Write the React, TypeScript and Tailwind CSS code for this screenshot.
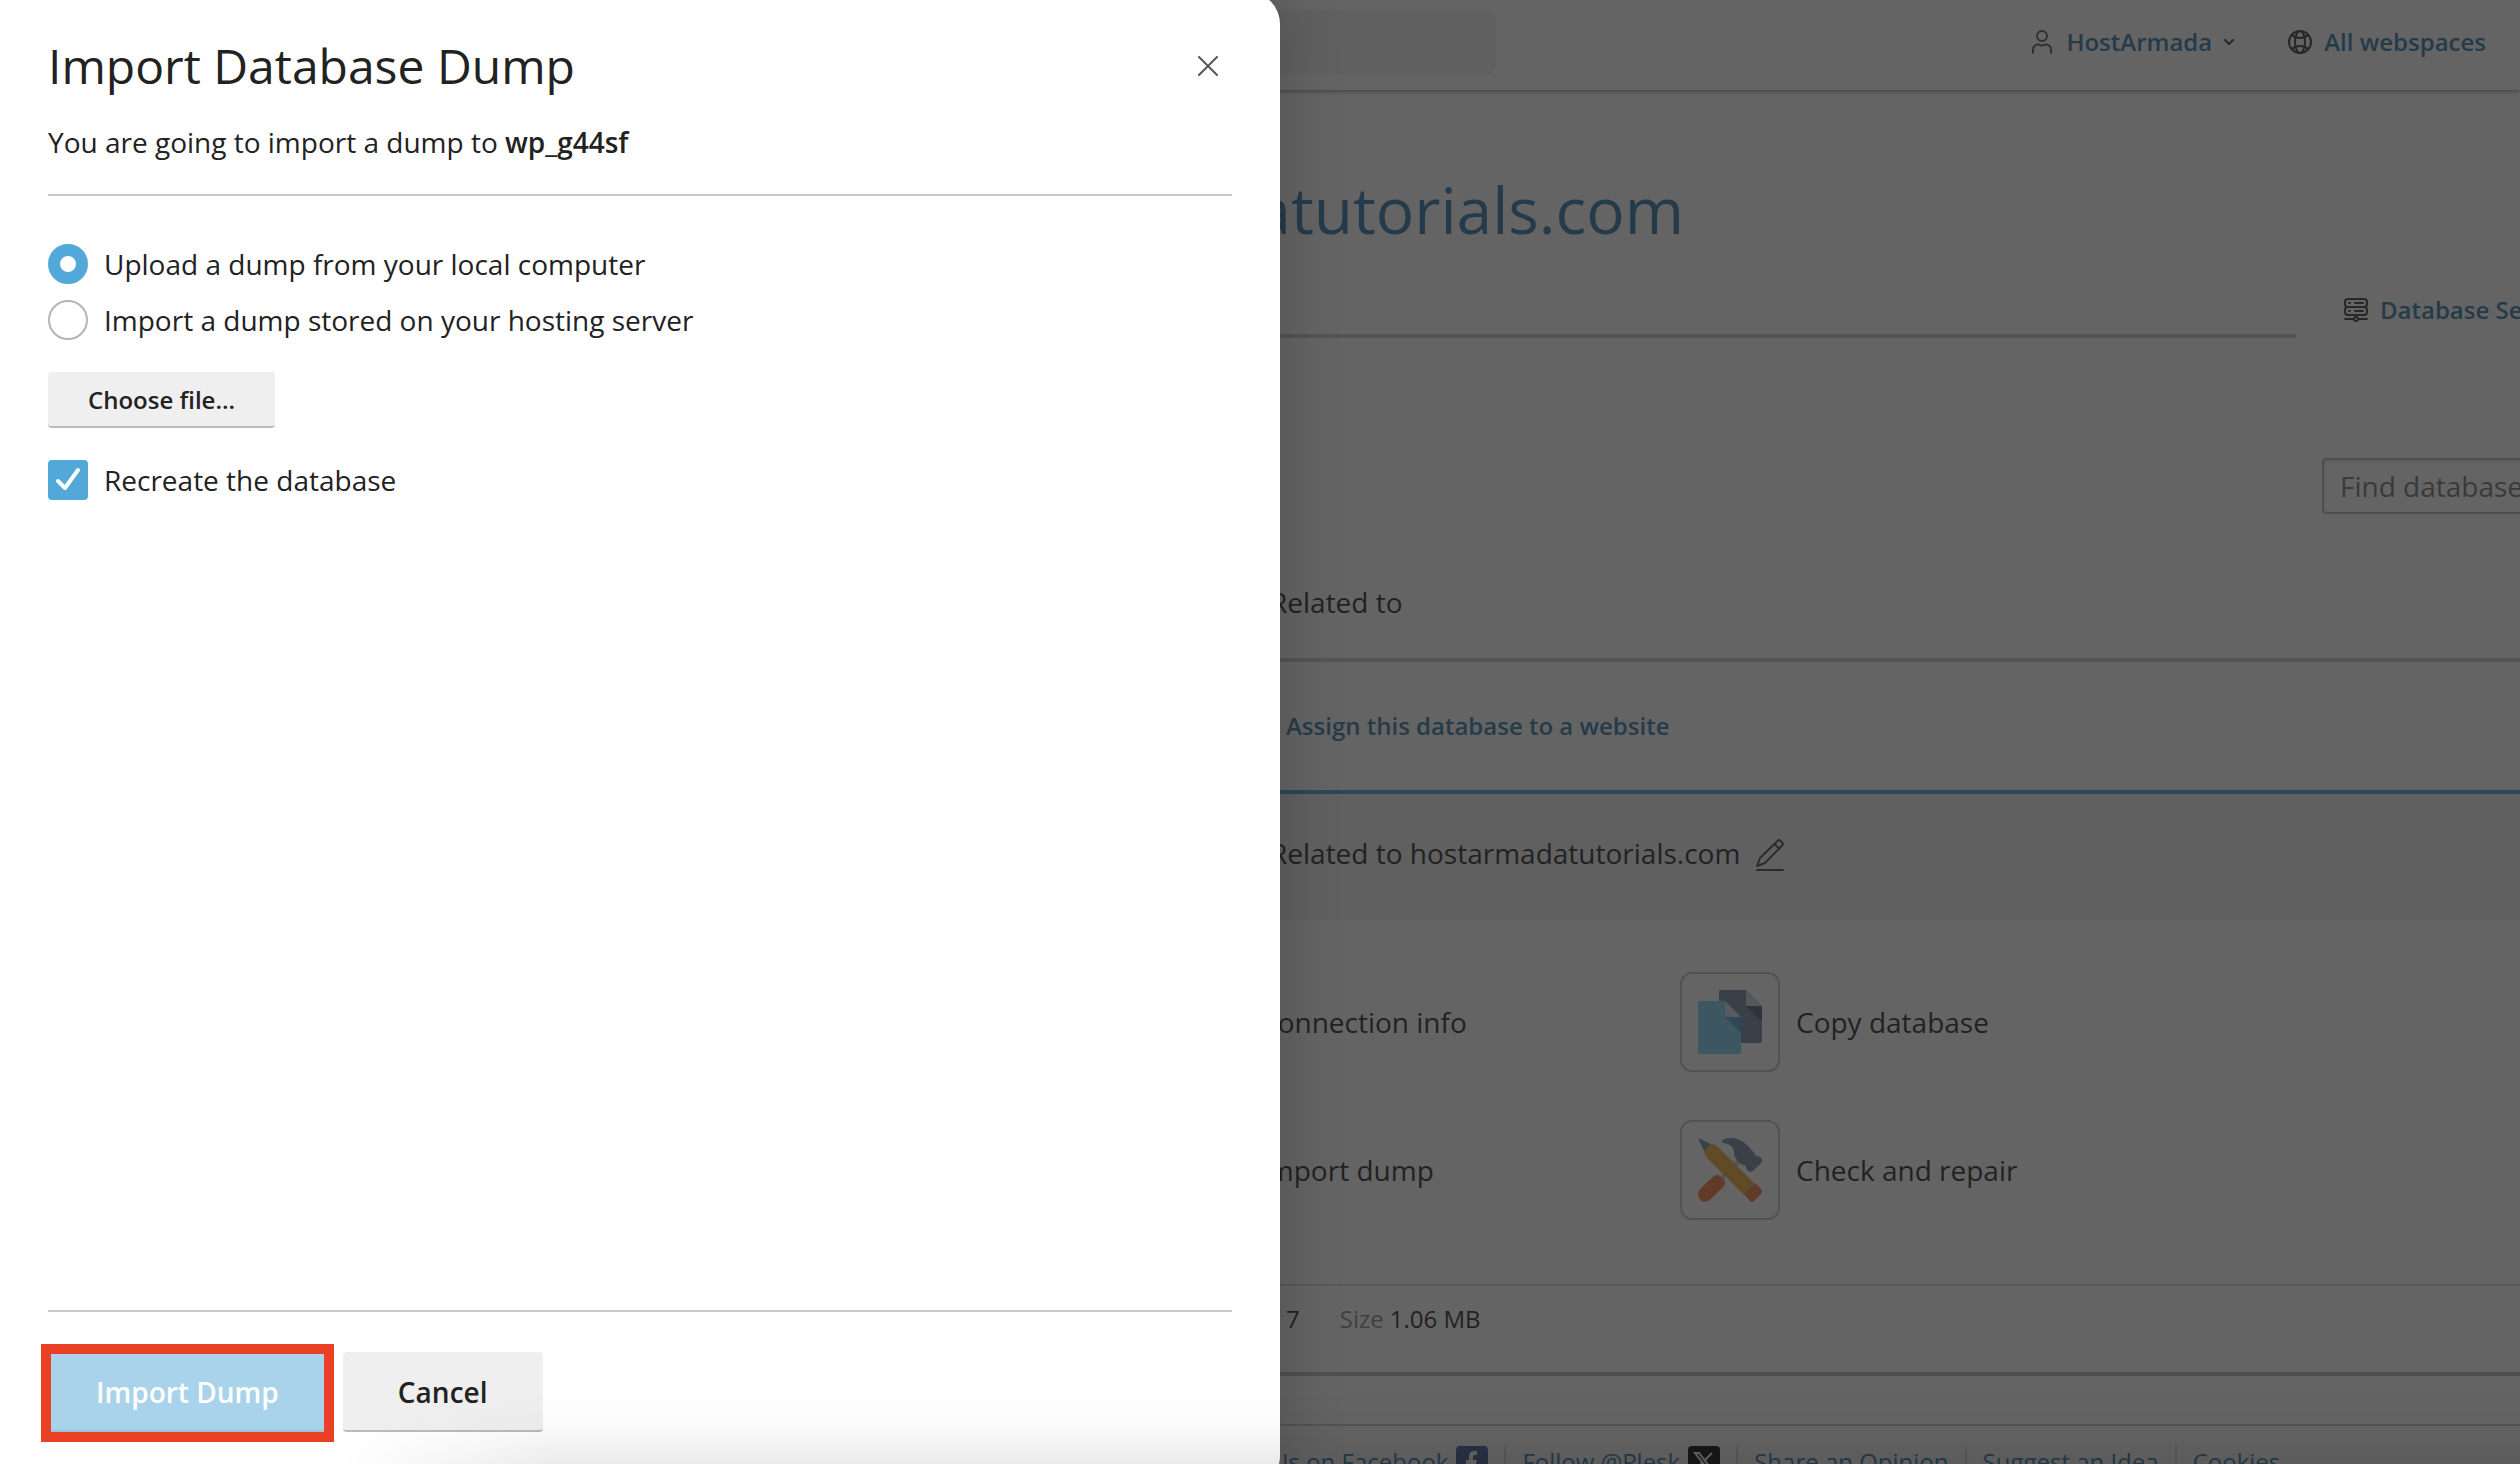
import type { ReactNode } from "react";

const iconStroke = {
  fill: "none",
  stroke: "currentColor",
  strokeWidth: 2,
  strokeLinecap: "round" as const,
  strokeLinejoin: "round" as const,
  "aria-hidden": true,
};

function UserIcon() {
  return (
    <svg className="h-6 w-6 text-[#555]" viewBox="0 0 24 24" {...iconStroke}>
      <circle cx="12" cy="6" r="5" />
      <path d="M3 23v-3.500a5 5 0 0 1 5-5c2 0 2.500 1 4 1s2-1 4-1a5 5 0 0 1 5 5V23" />
    </svg>
  );
}

function GlobeIcon() {
  return (
    <svg className="h-6 w-6 text-[#333]" viewBox="0 0 24 24" {...iconStroke}>
      <circle cx="12" cy="12" r="11" />
      <ellipse cx="12" cy="12" rx="5" ry="11" />
      <path d="M4 5c2 2 5 3 8 3s6-1 8-3M4 19c2-2 5-3 8-3s6 1 8 3" />
    </svg>
  );
}

function ServerIcon() {
  return (
    <svg className="h-6 w-6 text-[#333]" viewBox="0 0 24 24" {...iconStroke}>
      <rect x="1" y="1" width="22" height="8" rx="3" />
      <rect x="1" y="9" width="22" height="8" rx="3" />
      <path d="M5 5h1M11 5h8M5 13h1M11 13h8M1 21h8M15 21h8" />
      <circle cx="12" cy="21" r="2" />
    </svg>
  );
}

function EditIcon() {
  return (
    <svg className="h-8 w-7 text-[#444]" viewBox="0 0 28 32" {...iconStroke}>
      <path d="M1 27l3-8L22 1.500q1-1 2 0l2.500 2.500q1 1 0 2L9 24zM18.500 5l5 5" />
      <path d="M1 31h26" />
    </svg>
  );
}

function CopyIcon() {
  return (
    <svg className="h-16 w-16" viewBox="0 0 64 64" aria-hidden="true">
      <path fill="#71859d" d="M23 0h25l16 16v35a2 2 0 0 1-2 2H23a2 2 0 0 1-2-2V2a2 2 0 0 1 2-2z" />
      <path fill="#cbcfdb" d="M48 0l16 16H48z" />
      <path fill="#4c6078" d="M48 16h16v16z" />
      <path fill="#7bd4f3" d="M2 11h25l16 16v35a2 2 0 0 1-2 2H2a2 2 0 0 1-2-2V13a2 2 0 0 1 2-2z" />
      <path fill="#d0e2ee" d="M27 11l16 16H29a2 2 0 0 1-2-2z" />
      <path fill="#4ba0dc" d="M27 27h16v16z" />
    </svg>
  );
}

function ToolsIcon() {
  return (
    <svg className="h-16 w-16" viewBox="0 0 64 64" aria-hidden="true">
      <path stroke="#c3cddb" strokeWidth="5" d="M24 40l20-20" />
      <path
        fill="#71859d"
        d="M24 3C26 0 31 0 34 0c9 0 17 8 23 16q0 2 3 2 5 2 4 6l-9 9q-3 2-6-1-1-5-4-5-7-3-9-11 1-9-10-11-3 0-2-2z"
      />
      <path
        fill="#f37535"
        d="M16 38q3-2 6 0l4 4q2 3 0 6L13 61q-6 5-11 1-4-5 0-11z"
      />
      <path fill="#f0aa39" d="M6 13l7-7q4 0 7 3l37 37-11 11L9 20q-3-4-3-7z" />
      <path fill="#71859d" d="M0 0l13 6-7 7z" />
      <path fill="#f37535" d="M57 45l6 6q2 3 0 5l-7 7q-2 2-4 0l-6-7z" />
    </svg>
  );
}

function FacebookIcon() {
  return (
    <svg className="h-8 w-8" viewBox="0 0 32 32" aria-hidden="true">
      <rect width="32" height="32" rx="4" fill="#3b5998" />
      <path
        fill="#fff"
        d="M13 32V18h-3v-4h3v-3c0-4 2-6 5-6h3v4h-2c-2 0-2 1-2 2v3h4l-1 4h-3v14z"
      />
    </svg>
  );
}

function XIcon() {
  return (
    <svg className="h-8 w-8" viewBox="0 0 32 32" aria-hidden="true">
      <rect width="32" height="32" rx="4" fill="#000" />
      <path fill="none" stroke="#fff" strokeWidth="2" d="M7 7h4l14 18h-4zM24 7l-8 8M14 17l-7 8" />
    </svg>
  );
}

function Tool({ icon, label }: { icon?: ReactNode; label: string }) {
  return (
    <a href="#" className="flex items-center gap-4 text-[28px] leading-10">
      <span className="flex h-[100px] w-[100px] items-center justify-center rounded-xl border-2 border-[#c4c4c4]">
        {icon}
      </span>
      {label}
    </a>
  );
}

function FooterLink({ children, last }: { children: ReactNode; last?: boolean }) {
  return (
    <li className={last ? "" : "mr-4 border-r-2 border-[#dadada] pr-4"}>
      <a href="#" className="flex h-8 items-center gap-2 text-[#2f75a8]">
        {children}
      </a>
    </li>
  );
}

function Page() {
  return (
    <div className="h-full overflow-hidden whitespace-nowrap bg-white">
      <header className="flex h-[90px] items-center justify-end gap-[54px] pr-[34px] text-2xl font-semibold text-[#2f75a8] shadow-[0_1px_5px_rgba(0,0,0,0.5)]">
        <div className="mr-auto mb-[6px] h-16 w-[1496px] rounded-lg bg-[#f2f2f2]" />
        <button type="button" className="mb-[6px] flex items-center gap-3 font-semibold">
          <UserIcon />
          HostArmada
          <svg className="h-[10px] w-[10px] text-[#333]" viewBox="0 0 10 10" {...iconStroke}>
            <path d="M1 3l4 4 4-4" />
          </svg>
        </button>
        <a href="#" className="mb-[6px] flex items-center gap-3">
          <GlobeIcon />
          All webspaces
        </a>
      </header>

      <main>
        <h1 className="mt-[80px] w-[1684px] text-right text-[64px] leading-[80px] text-[#2f75a8]">
          hostarmadatutorials.com
        </h1>
        <div className="mt-12 flex h-10">
          <div className="h-1 flex-1 self-end bg-[#c8c8c8]" />
          <a
            href="#"
            className="ml-12 flex h-6 w-[176px] items-center gap-3 text-2xl font-semibold text-[#2f75a8]"
          >
            <span className="shrink-0">
              <ServerIcon />
            </span>
            Database Servers
          </a>
        </div>
        <div className="mt-[120px] flex justify-end">
          <div className="w-[198px]">
            <input
              type="search"
              aria-label="Find databases"
              placeholder="Find databases..."
              className="h-14 w-[400px] rounded border-2 border-[#b4b4b4] bg-white px-4 text-[28px] shadow-[inset_0_2px_4px_rgba(0,0,0,0.1)] placeholder:text-[#737373]"
            />
          </div>
        </div>

        <table className="mt-8 w-full border-separate border-spacing-0 text-left text-[28px] leading-10">
          <thead>
            <tr>
              <th className="h-[116px] border-b-4 border-[#c8c8c8] p-0 pl-[1270px] font-normal">Related to</th>
            </tr>
          </thead>
          <tbody>
            <tr>
              <td className="h-[132px] border-b-4 border-[#43a0d5] p-0 pl-[1286px] text-2xl font-semibold">
                <a href="#" className="text-[#2f75a8]">
                  Assign this database to a website
                </a>
              </td>
            </tr>
            <tr>
              <td className="h-[126px] bg-[#f0f0f0] p-0 pb-2 pl-[1270px]">
                <span className="flex items-center gap-4">
                  Related to hostarmadatutorials.com
                  <button type="button" aria-label="Edit" className="mt-1">
                    <EditIcon />
                  </button>
                </span>
              </td>
            </tr>
          </tbody>
        </table>

        <div className="grid grid-cols-[536px_1fr] gap-y-12 border-b-2 border-[#dadada] pt-[52px] pb-16 pl-[1144px]">
          <Tool label="Connection info" />
          <Tool label="Copy database" icon={<CopyIcon />} />
          <Tool label="Import dump" />
          <Tool label="Check and repair" icon={<ToolsIcon />} />
        </div>
        <dl className="flex h-[90px] gap-10 border-b-4 border-[#bdbdbd] pt-[17px] pl-[1286px] text-2xl leading-8">
          <dd>7</dd>
          <div className="flex gap-[6px]">
            <dt className="text-[#888]">Size</dt>
            <dd>1.06 MB</dd>
          </div>
        </dl>
      </main>

      <footer className="mt-12 border-t-2 border-[#c8c8c8] pt-5 pl-[1271px]">
        <ul className="flex text-2xl">
          <FooterLink>
            Us on Facebook
            <FacebookIcon />
          </FooterLink>
          <FooterLink>
            Follow @Plesk
            <XIcon />
          </FooterLink>
          <FooterLink>Share an Opinion</FooterLink>
          <FooterLink>Suggest an Idea</FooterLink>
          <FooterLink last>Cookies</FooterLink>
        </ul>
      </footer>
    </div>
  );
}

function RadioOption({ label, checked }: { label: string; checked?: boolean }) {
  return (
    <label className="flex items-center gap-4">
      <input
        type="radio"
        name="source"
        defaultChecked={checked}
        className="h-10 w-10 appearance-none rounded-full border-2 border-[#b5b5b5] bg-white checked:border-[12px] checked:border-[#53a8da]"
      />
      {label}
    </label>
  );
}

function ImportDialog() {
  return (
    <form
      role="dialog"
      aria-labelledby="dialog-title"
      className="absolute -top-2 -bottom-6 left-0 flex w-[1280px] flex-col rounded-r-[32px] bg-white px-12 pt-[42px] pb-14 text-[28px] leading-10 shadow-[0_0_64px_rgba(0,0,0,0.2)]"
    >
      <header className="border-b-2 border-[#c8c8c8] pb-8">
        <div className="flex items-center justify-between">
          <h2 id="dialog-title" className="text-5xl leading-[64px]">
            Import Database Dump
          </h2>
          <button type="button" aria-label="Close" className="mr-[14px] text-[#555]">
            <svg className="h-5 w-5" viewBox="0 0 20 20" {...iconStroke}>
              <path d="M1 1l18 18M19 1L1 19" />
            </svg>
          </button>
        </div>
        <p className="mt-6">
          You are going to import a dump to <b className="font-semibold">wp_g44sf</b>
        </p>
      </header>

      <div className="flex flex-1 flex-col items-start pt-12">
        <div className="flex flex-col gap-4">
          <RadioOption label="Upload a dump from your local computer" checked />
          <RadioOption label="Import a dump stored on your hosting server" />
        </div>
        <button
          type="button"
          className="mt-8 h-14 rounded border-b-2 border-[#bababa] bg-[#efefef] px-10 pt-0.5 text-2xl font-semibold"
        >
          Choose file...
        </button>
        <label className="mt-8 flex items-center gap-4">
          <span className="relative h-10 w-10">
            <input
              type="checkbox"
              defaultChecked
              className="block h-10 w-10 appearance-none rounded border-2 border-[#53a8da] bg-[#53a8da]"
            />
            <svg
              className="pointer-events-none absolute inset-0 h-10 w-10 text-white"
              viewBox="0 0 40 40"
              {...iconStroke}
              strokeWidth="4"
            >
              <path d="M10 21l7 7L30 10" />
            </svg>
          </span>
          Recreate the database
        </label>
      </div>

      <footer className="flex gap-4 border-t-2 border-[#c8c8c8] pt-10 font-semibold">
        <div className="relative">
          <button
            type="submit"
            className="h-20 rounded border-b-2 border-[#9cc3da] bg-[#a9d2eb] px-12 pt-0.5 font-semibold text-white"
          >
            Import Dump
          </button>
          <div className="pointer-events-none absolute -inset-x-[7px] -top-2 -bottom-[10px] border-[10px] border-[#ea4025]" />
        </div>
        <button
          type="button"
          className="h-20 w-[200px] rounded border-b-2 border-[#bababa] bg-[#efefef] pt-0.5 font-semibold"
        >
          Cancel
        </button>
      </footer>
    </form>
  );
}

export default function App() {
  return (
    <div className="relative h-screen overflow-hidden font-['Open_Sans',sans-serif] text-[#222]">
      <Page />
      <div className="absolute inset-0 bg-[#222]/70" />
      <ImportDialog />
      <div className="pointer-events-none absolute right-0 bottom-0 left-[340px] h-[72px] bg-linear-to-b from-transparent via-black/2 to-black/8 mask-l-from-90%" />
    </div>
  );
}
